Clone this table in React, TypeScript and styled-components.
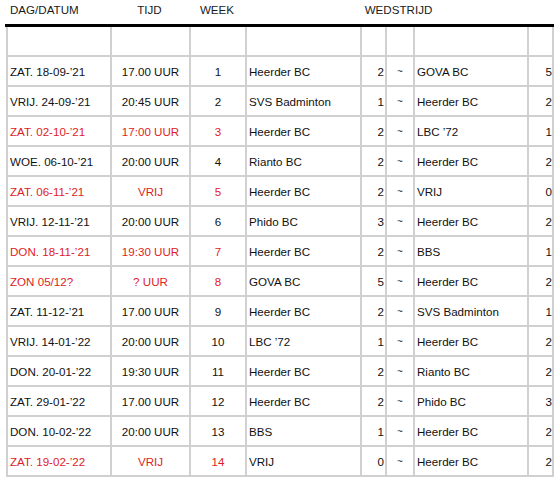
import React, {FC} from 'react';
import styled, {createGlobalStyle} from 'styled-components';

const GlobalStyle = createGlobalStyle`
  html, body {
    margin: 0;
    padding: 0;
    background: #fff;
  }
  body {
    font-family: "Liberation Sans", Arial, sans-serif;
  }
`;

// column widths measured from the schedule sheet
const COLUMNS = '102px 77px 54px 113px 23px 26px 112px 23px';

const Sheet = styled.div`
  width: 548px;
  margin-left: 6px;
  font-size: 11.6px;
  color: #111;
`;

const HeaderRow = styled.div`
  display: grid;
  grid-template-columns: ${COLUMNS};
  column-gap: 2px;
  height: 24px;
  padding: 0 2px;
  margin-left: -1px;
  width: 545px;
  border-bottom: 3px solid #000;
  align-items: start;
`;

const HeaderCell = styled.div<{ $align?: string; $span?: number }>`
  text-align: ${p => p.$align || 'center'};
  grid-column: ${p => (p.$span ? `span ${p.$span}` : 'auto')};
  padding-left: ${p => (p.$align === 'left' ? '3px' : '0')};
  padding-top: 3px;
  color: #1a1a1a;
  white-space: nowrap;
`;

const Body = styled.div`
  display: grid;
  grid-template-columns: ${COLUMNS};
  grid-auto-rows: 28px;
  gap: 2px;
  padding: 0 2px 2px 2px;
  background: #d0d0d0;
`;

type Align = 'left' | 'center' | 'right' | 'edge';

const Cell = styled.div<{ $align?: Align; $red?: boolean }>`
  background: #fff;
  display: flex;
  align-items: center;
  justify-content: ${p => (p.$align === 'right' || p.$align === 'edge' ? 'flex-end' : p.$align === 'center' ? 'center' : 'flex-start')};
  padding: ${p => (p.$align === 'right' ? '0 1px 0 0' : p.$align === 'left' ? '0 0 0 2px' : '0')};
  color: ${p => (p.$red ? '#e01c24' : '#111')};
  white-space: nowrap;
`;

const Tilde = styled.span`
  font-size: 10px;
  color: #333;
`;

interface Match {
    date: string;
    time: string;
    week: number;
    home: string;
    homeScore: number;
    away: string;
    awayScore: number;
    red?: boolean;
}

const matches: Match[] = [
    {date: 'ZAT. 18-09-’21', time: '17.00 UUR', week: 1, home: 'Heerder BC', homeScore: 2, away: 'GOVA BC', awayScore: 5},
    {date: 'VRIJ. 24-09-’21', time: '20:45 UUR', week: 2, home: 'SVS Badminton', homeScore: 1, away: 'Heerder BC', awayScore: 2},
    {date: 'ZAT. 02-10-’21', time: '17:00 UUR', week: 3, home: 'Heerder BC', homeScore: 2, away: 'LBC ’72', awayScore: 1, red: true},
    {date: 'WOE. 06-10-’21', time: '20:00 UUR', week: 4, home: 'Rianto BC', homeScore: 2, away: 'Heerder BC', awayScore: 2},
    {date: 'ZAT. 06-11-’21', time: 'VRIJ', week: 5, home: 'Heerder BC', homeScore: 2, away: 'VRIJ', awayScore: 0, red: true},
    {date: 'VRIJ. 12-11-’21', time: '20:00 UUR', week: 6, home: 'Phido BC', homeScore: 3, away: 'Heerder BC', awayScore: 2},
    {date: 'DON. 18-11-’21', time: '19:30 UUR', week: 7, home: 'Heerder BC', homeScore: 2, away: 'BBS', awayScore: 1, red: true},
    {date: 'ZON 05/12?', time: '? UUR', week: 8, home: 'GOVA BC', homeScore: 5, away: 'Heerder BC', awayScore: 2, red: true},
    {date: 'ZAT. 11-12-’21', time: '17.00 UUR', week: 9, home: 'Heerder BC', homeScore: 2, away: 'SVS Badminton', awayScore: 1},
    {date: 'VRIJ. 14-01-’22', time: '20:00 UUR', week: 10, home: 'LBC ’72', homeScore: 1, away: 'Heerder BC', awayScore: 2},
    {date: 'DON. 20-01-’22', time: '19:30 UUR', week: 11, home: 'Heerder BC', homeScore: 2, away: 'Rianto BC', awayScore: 2},
    {date: 'ZAT. 29-01-’22', time: '17.00 UUR', week: 12, home: 'Heerder BC', homeScore: 2, away: 'Phido BC', awayScore: 3},
    {date: 'DON. 10-02-’22', time: '20:00 UUR', week: 13, home: 'BBS', homeScore: 1, away: 'Heerder BC', awayScore: 2},
    {date: 'ZAT. 19-02-’22', time: 'VRIJ', week: 14, home: 'VRIJ', homeScore: 0, away: 'Heerder BC', awayScore: 2, red: true},
];

const App: FC = () => {
    return (
        <>
            <GlobalStyle/>
            <Sheet>
                <HeaderRow>
                    <HeaderCell $align="left">DAG/DATUM</HeaderCell>
                    <HeaderCell>TIJD</HeaderCell>
                    <HeaderCell>WEEK</HeaderCell>
                    <HeaderCell $span={5}>WEDSTRIJD</HeaderCell>
                </HeaderRow>
                <Body>
                    {/* empty spacer row under the header */}
                    {Array.from({length: 8}).map((_, i) => <Cell key={`e${i}`}/>)}
                    {matches.map(m => (
                        <React.Fragment key={m.week}>
                            <Cell $align="left" $red={m.red}>{m.date}</Cell>
                            <Cell $align="center" $red={m.red}>{m.time}</Cell>
                            <Cell $align="center" $red={m.red}>{m.week}</Cell>
                            <Cell $align="left">{m.home}</Cell>
                            <Cell $align="right">{m.homeScore}</Cell>
                            <Cell $align="center"><Tilde>~</Tilde></Cell>
                            <Cell $align="left">{m.away}</Cell>
                            <Cell $align="edge">{m.awayScore}</Cell>
                        </React.Fragment>
                    ))}
                </Body>
            </Sheet>
        </>
    );
};

export default App;
